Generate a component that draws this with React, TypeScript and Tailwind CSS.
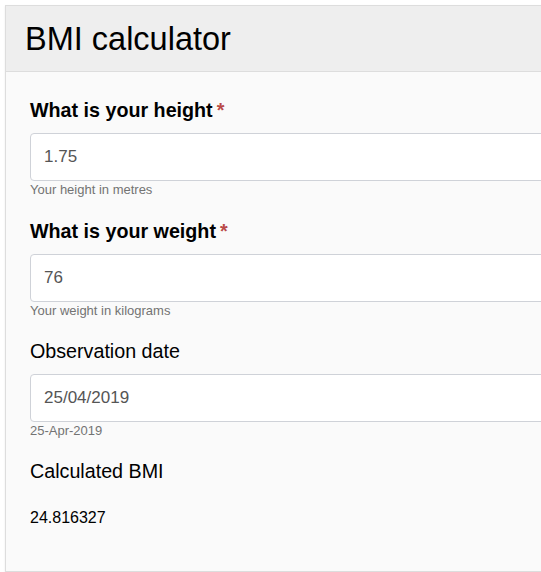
import React from "react";

function Field({
  label,
  required,
  value,
  help,
  mb,
}: {
  label: string;
  required?: boolean;
  value: string;
  help: string;
  mb: string;
}) {
  return (
    <div className={mb}>
      <div
        className={`h-[24px] leading-[24px] text-[19.7px] text-black ${required ? "font-bold" : "font-normal"}`}
      >
        {label}
        {required && <span className="ml-[4px] text-[#b94a48]">*</span>}
      </div>
      <div className="mt-[11px] h-[48px] rounded-[4px] border border-[#cfd2d8] bg-white flex items-center pl-[13px] text-[17px] text-[#555555]">
        {value}
      </div>
      <div className="mt-[1px] h-[16px] leading-[16px] text-[13px] text-[#737373]">{help}</div>
    </div>
  );
}

export default function App() {
  return (
    <div
      className="w-[541px] h-[572px] overflow-hidden bg-white pt-[5px] pl-[5px]"
      style={{ fontFamily: '"Liberation Sans", Arial, sans-serif' }}
    >
      <div className="w-[600px] border border-[#dddddd] bg-[#fafafa] shadow-[0_1px_2px_rgba(0,0,0,0.08)]">
        <div className="h-[66px] bg-[#eeeeee] border-b border-[#dddddd] flex items-center pl-[19px]">
          <h1 className="text-[32.5px] leading-none text-black font-normal pt-[1px]">BMI calculator</h1>
        </div>
        <div className="pt-[26px] pl-[24px] pb-[42px]">
          <Field mb="mb-[21px]" label="What is your height" required value="1.75" help="Your height in metres" />
          <Field mb="mb-[20px]" label="What is your weight" required value="76" help="Your weight in kilograms" />
          <Field mb="mb-[20px]" label="Observation date" value="25/04/2019" help="25-Apr-2019" />
          <div className="h-[24px] leading-[24px] text-[19.7px] text-black">Calculated BMI</div>
          <div className="mt-[24px] h-[22px] leading-[22px] text-[16px] text-black">24.816327</div>
        </div>
      </div>
    </div>
  );
}
